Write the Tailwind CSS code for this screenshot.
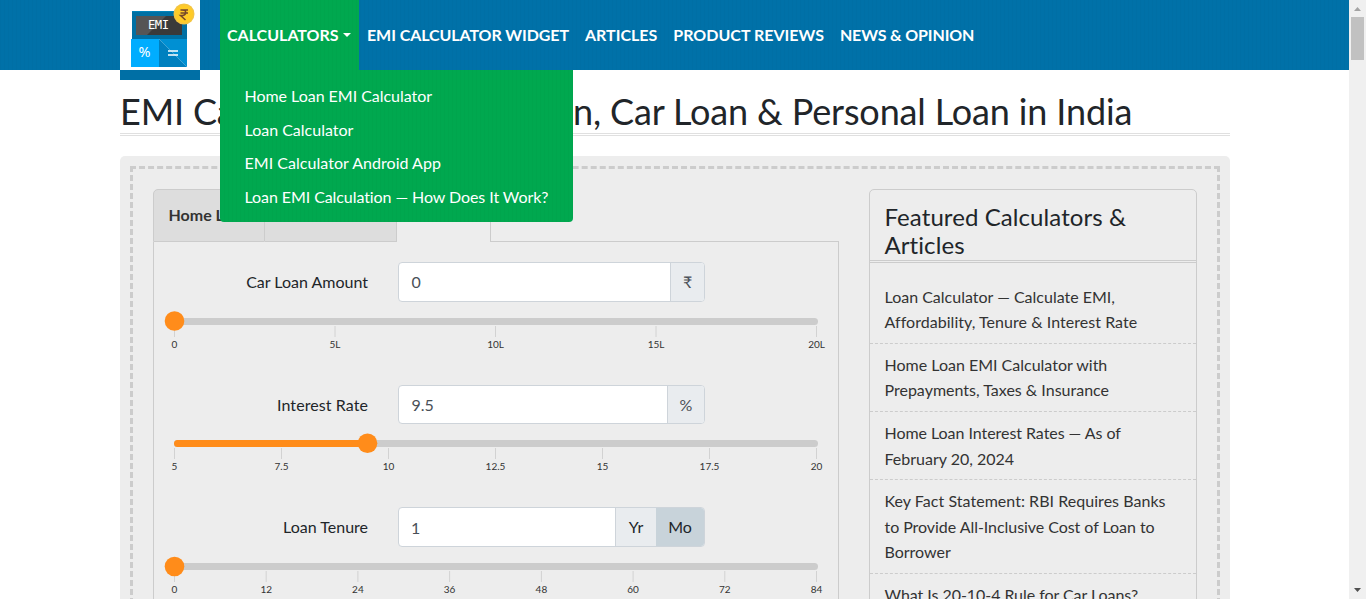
<!DOCTYPE html>
<html lang="en">
<head>
<meta charset="utf-8">
<title>EMI Calculator</title>
<script src="https://cdn.jsdelivr.net/npm/@tailwindcss/browser@4"></script>
</head>
<body class="relative flex h-[599px] overflow-hidden bg-white font-['Lato',sans-serif] text-base leading-[25.6px] text-[#212529] [font-variant-ligatures:none]">
<div class="h-[599px] w-[1349px] overflow-hidden">
  <header class="h-[70px] bg-[#0071a8] bg-[repeating-linear-gradient(90deg,#006fa5_0_1px,transparent_1px_4px)] pl-[120px]">
    <div class="flex h-[70px] w-[1110px]">
      <a class="relative z-10 mr-5 block h-20 w-20 shrink-0">
        <svg class="block" width="80" height="80" viewBox="0 0 80 80">
          <rect width="80" height="70" fill="#fff"/>
          <rect y="70" width="80" height="10" fill="#006fa5"/>
          <rect x="12" y="11" width="55" height="28" fill="#0070a3"/>
          <rect x="12" y="11" width="55" height="1" fill="#0084bb"/>
          <rect x="16" y="16" width="46" height="19" fill="#3a3a3a"/>
          <path d="M16 16H46L27 35H16Z" fill="#555"/>
          <rect x="11" y="39" width="28" height="28" fill="#00adff"/>
          <path d="M39 39H67V67Z" fill="#0090d3"/>
          <path d="M39 39L67 67H39Z" fill="#0080bf"/>
          <text x="28" y="29" font-family="DejaVu Sans Mono" font-size="12.2" fill="#fff" textLength="21">EMI</text>
          <text x="18.500" y="57" font-family="Noto Sans" font-size="14" fill="#fff" textLength="12" lengthAdjust="spacingAndGlyphs">%</text>
          <path d="M48 51H58M48 55H58" stroke="#fff" stroke-width="1.700"/>
          <circle cx="64" cy="14" r="10.500" fill="#f4c542"/>
          <circle cx="64" cy="14" r="9" fill="#ffcb27"/>
          <path d="M60.500 10H68M60.500 13H68M60.500 10C67.500 9 67.500 15.500 60.500 15.500L65.500 20" fill="none" stroke="#75472b" stroke-width="1.500"/>
        </svg>
      </a>
      <nav class="flex h-[70px] items-center whitespace-nowrap font-bold text-white">
        <div class="relative flex h-[70px] w-[139px] items-center bg-[#00a84f] bg-[repeating-linear-gradient(90deg,#00a54d_0_1px,transparent_1px_4px)] pl-[7px]">
          <span>CALCULATORS</span>
          <svg class="ml-[4px]" width="8" height="4" viewBox="0 0 8 4"><path d="M0 0H8L4 4Z" fill="#fff"/></svg>
          <ul class="absolute left-0 top-[70px] z-20 h-[152px] w-[353px] rounded-b bg-[#00a84f] bg-[repeating-linear-gradient(90deg,#00a54d_0_1px,transparent_1px_4px)] pl-[24.500px] pt-[9px] font-normal leading-[33.6px]">
            <li class="tracking-[-0.03px]">Home Loan EMI Calculator</li>
            <li>Loan Calculator</li>
            <li class="tracking-[0.04px]">EMI Calculator Android App</li>
            <li class="tracking-[-0.080px]">Loan EMI Calculation — How Does It Work?</li>
          </ul>
        </div>
        <a class="px-2 tracking-[-0.08px]">EMI CALCULATOR WIDGET</a>
        <a class="px-2">ARTICLES</a>
        <a class="px-2">PRODUCT REVIEWS</a>
        <a class="px-2 tracking-[-0.14px]">NEWS &amp; OPINION</a>
      </nav>
    </div>
  </header>
  <main class="ml-[120px] w-[1110px]">
    <h1 class="mt-5 mb-5 h-[46px] whitespace-nowrap border-b-[3px] border-double border-[#e0e0e0] text-[36px] leading-[43px] tracking-[-0.14px]">EMI Calculator for Home Loan, Car Loan &amp; Personal Loan in India</h1>
    <div class="h-[600px] rounded-[5px] bg-[#ededed] p-[10px]">
      <div class="flex h-[600px] gap-[30px] border-[3px] border-dashed border-[#ccc] p-5">
        <section class="w-[686px]">
          <div class="flex h-[53px] font-bold leading-[50px] text-[#333]">
            <div class="w-[112px] overflow-hidden whitespace-nowrap rounded-tl-[5px] border border-[#ccc] bg-[#ddd] pl-[14.500px]">Home Loan</div>
            <div class="w-[132px] border-y border-r border-[#ccc] bg-[#ddd] pl-[15px]">Personal Loan</div>
            <div class="w-[94px] border-r border-t border-[#ccc] pl-[15px]">Car Loan</div>
            <div class="flex-1 border-b border-[#ccc]"></div>
          </div>
          <div class="h-[500px] border-x border-[#ccc] pt-5">
            <div class="h-[123px]">
              <div class="flex h-10">
                <label class="mr-[30px] w-[214px] text-right leading-[39px]">Car Loan Amount</label>
                <div class="flex w-[307px] overflow-hidden rounded border border-[#ced4da] bg-white leading-[38px] text-[#495057]">
                  <span class="flex-1 pl-[12.500px]">0</span>
                  <span class="w-[34px] border-l border-[#ced4da] bg-[#e9ecef] text-center">₹</span>
                </div>
              </div>
              <svg class="mt-[8px] block" width="684" height="44" font-family="Lato" font-size="10" fill="#333" text-anchor="middle">
                <path d="M20.500 16V27M181 16V27M341.500 16V27M502 16V27M662.500 16V27" stroke="#d2d2d2"/>
                <rect x="20" y="8" width="644" height="7" rx="3.500" fill="#ccc"/>
                <circle cx="20.500" cy="11" r="9.800" fill="#ff8c1a"/>
                <text x="20.500" y="38">0</text><text x="181" y="38">5L</text><text x="341.500" y="38">10L</text><text x="502" y="38">15L</text><text x="662.500" y="38">20L</text>
              </svg>
            </div>
            <div class="h-[122px]">
              <div class="flex h-[39px]">
                <label class="mr-[30px] w-[214px] text-right leading-[39px] tracking-[0.08px]">Interest Rate</label>
                <div class="flex w-[307px] overflow-hidden rounded border border-[#ced4da] bg-white leading-[37px] text-[#495057]">
                  <span class="flex-1 pl-[12.500px]">9.5</span>
                  <span class="w-[37px] border-l border-[#ced4da] bg-[#e9ecef] text-center">%</span>
                </div>
              </div>
              <svg class="mt-[8px] block" width="684" height="44" font-family="Lato" font-size="10" fill="#333" text-anchor="middle">
                <path d="M20.500 16V27M127.500 16V27M234.500 16V27M341.500 16V27M448.500 16V27M555.500 16V27M662.500 16V27" stroke="#d2d2d2"/>
                <rect x="20" y="8" width="644" height="7" rx="3.500" fill="#ccc"/>
                <path d="M213.500 8H23.500a3.500 3.500 0 0 0 0 7H213.500Z" fill="#ff8c1a"/>
                <circle cx="213.500" cy="11.300" r="9.800" fill="#ff8c1a"/>
                <text x="20.500" y="38">5</text><text x="127.500" y="38">7.5</text><text x="234.500" y="38">10</text><text x="341.500" y="38">12.5</text><text x="448.500" y="38">15</text><text x="555.500" y="38">17.5</text><text x="662.500" y="38">20</text>
              </svg>
            </div>
            <div class="h-[123px]">
              <div class="flex h-10">
                <label class="mr-[30px] w-[214px] text-right leading-[39px]">Loan Tenure</label>
                <div class="flex w-[307px] overflow-hidden rounded border border-[#ced4da] bg-white leading-[37px] text-[#495057]">
                  <span class="flex-1 pl-3 leading-[39px]">1</span>
                  <span class="w-[41px] border-l border-[#ced4da] bg-[#e9ecef] text-center text-[#212529]">Yr</span>
                  <span class="w-[48px] bg-[#c8d3da] text-center text-[#212529]">Mo</span>
                </div>
              </div>
              <svg class="mt-[8px] block" width="684" height="44" font-family="Lato" font-size="10" fill="#333" text-anchor="middle">
                <path d="M20.500 16V27M112.200 16V27M203.900 16V27M295.600 16V27M387.400 16V27M479.100 16V27M570.800 16V27M662.500 16V27" stroke="#d2d2d2"/>
                <rect x="20" y="8" width="644" height="7" rx="3.500" fill="#ccc"/>
                <circle cx="20.500" cy="11.500" r="9.800" fill="#ff8c1a"/>
                <text x="20.500" y="38">0</text><text x="112.200" y="38">12</text><text x="203.900" y="38">24</text><text x="295.600" y="38">36</text><text x="387.400" y="38">48</text><text x="479.100" y="38">60</text><text x="570.800" y="38">72</text><text x="662.500" y="38">84</text>
              </svg>
            </div>
          </div>
        </section>
        <aside class="h-[500px] w-[328px] rounded-t-[5px] border border-[#ccc] text-[#333]">
          <h2 class="h-[73px] border-b-[3px] border-double border-[#ccc] px-[14.500px] pt-[13px] text-[24px] leading-[28px] tracking-[0.08px] text-[#212529]">Featured Calculators &amp;<br>Articles</h2>
          <ul class="whitespace-nowrap pt-[12.700px]">
            <li class="border-b border-dashed border-[#ccc] px-[14.500px] py-2">Loan Calculator — Calculate EMI,<br><span class="tracking-[0.04px]">Affordability, Tenure &amp; Interest Rate</span></li>
            <li class="border-b border-dashed border-[#ccc] px-[14.500px] py-2">Home Loan EMI Calculator with<br>Prepayments, Taxes &amp; Insurance</li>
            <li class="border-b border-dashed border-[#ccc] px-[14.500px] py-2"><span class="tracking-[-0.05px]">Home Loan Interest Rates — As of</span><br>February 20, 2024</li>
            <li class="border-b border-dashed border-[#ccc] px-[14.500px] py-2"><span class="tracking-[0.04px]">Key Fact Statement: RBI Requires Banks</span><br><span class="tracking-[-0.05px]">to Provide All-Inclusive Cost of Loan to</span><br>Borrower</li>
            <li class="px-[14.500px] py-2 tracking-[-0.05px]">What Is 20-10-4 Rule for Car Loans?</li>
          </ul>
        </aside>
      </div>
    </div>
  </main>
</div>
<div class="h-[599px] w-[17px] bg-[#f0f0f0]">
  <svg class="block" width="17" height="599">
    <path d="M5 11L8.500 7L12 11Z" fill="#a3a3a3"/>
    <rect x="2" y="17" width="13" height="43" fill="#c1c1c1"/>
    <path d="M5 588H12L8.500 592Z" fill="#505050"/>
  </svg>
</div>
</body>
</html>
